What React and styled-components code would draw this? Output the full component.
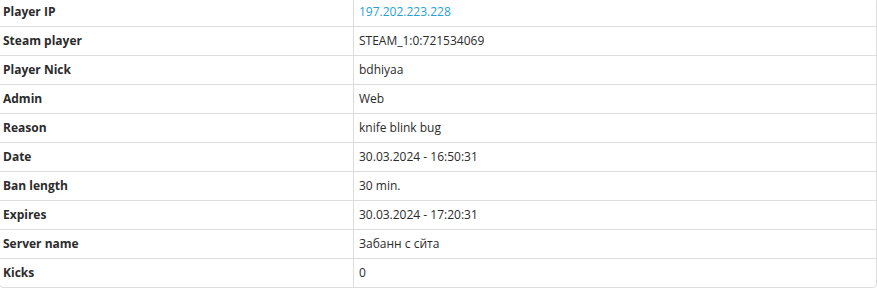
import React from 'react'
import styled, { createGlobalStyle } from 'styled-components'

const GlobalStyle = createGlobalStyle`
  html, body {
    margin: 0;
    padding: 0;
    background: #fff;
    overflow: hidden;
  }
  body {
    font-family: "Open Sans", "Noto Sans", sans-serif;
    font-size: 12px;
    color: #333;
  }
`

const rows = [
  { label: 'Player IP', value: '197.202.223.228', link: true },
  { label: 'Steam player', value: 'STEAM_1:0:721534069' },
  { label: 'Player Nick', value: 'bdhiyaa' },
  { label: 'Admin', value: 'Web' },
  { label: 'Reason', value: 'knife blink bug' },
  { label: 'Date', value: '30.03.2024 - 16:50:31' },
  { label: 'Ban length', value: '30 min.' },
  { label: 'Expires', value: '30.03.2024 - 17:20:31' },
  { label: 'Server name', value: 'Забанн с сйта' },
  { label: 'Kicks', value: '0' },
]

const App = () => {
  return (
    <>
      <GlobalStyle />
      <Card>
        {rows.map(({ label, value, link }) => (
          <Row key={label}>
            <Label>{label}</Label>
            <Value>
              {link ? <IpLink href="#">{value}</IpLink> : value}
            </Value>
          </Row>
        ))}
      </Card>
    </>
  )
}

export default App

const Card = styled.div`
  width: 878px;
  margin: -3px 0 0 -1px;
  border: 1px solid #ddd;
  border-radius: 4px;
  overflow: hidden;
  box-sizing: border-box;
  display: flex;
  flex-direction: column;
`

const Row = styled.div`
  display: grid;
  grid-template-columns: 354px 1fr;
  height: 28px;
  & + & {
    border-top: 1px solid #ddd;
  }
`

const Cell = styled.div`
  display: flex;
  align-items: center;
  padding: 0 6px 2px;
  color: #2b2b2b;
  white-space: nowrap;
`

const Label = styled(Cell)`
  padding-left: 3px;
  font-weight: 700;
  border-right: 1px solid #ddd;
`

const Value = styled(Cell)`
  padding-left: 5px;
`

const IpLink = styled.a`
  color: #2a9fd6;
  text-decoration: none;
`
